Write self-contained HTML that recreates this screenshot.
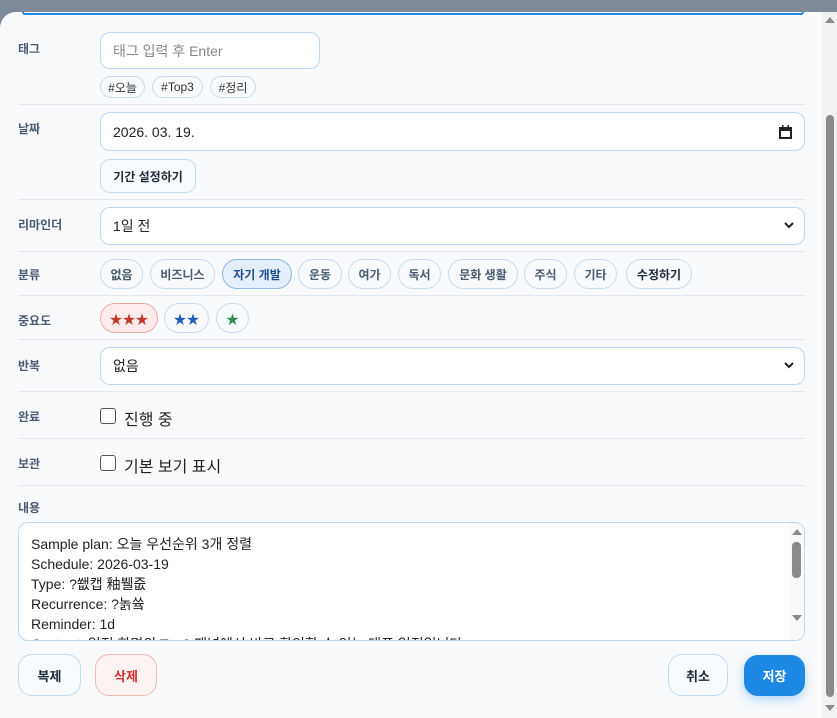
<!DOCTYPE html>
<html><head><meta charset="utf-8"><style>
*{box-sizing:border-box;margin:0;padding:0}
body{width:837px;height:718px;overflow:hidden;background:#7f8a99;font-family:"Liberation Sans","Noto Sans CJK KR",sans-serif;position:relative}
.dlg{position:absolute;left:0;top:12px;width:822px;height:706px;background:#f8fafc;border-radius:16px 0 0 0}
.a{position:absolute}
.lbl{position:absolute;left:18px;font-size:12px;font-weight:bold;color:#4a5a70}
.sep{position:absolute;left:18px;width:787px;height:1px;background:#e3e8ee}
.inp{position:absolute;background:#fff;border:1px solid #bcd8f2;border-radius:10px;font-size:14px;color:#222;padding-left:12px;display:flex;align-items:center}
.chip{position:absolute;border:1px solid #c9dbee;border-radius:16px;background:#f8fafc;font-size:12px;color:#4a5a70;font-weight:bold;display:flex;align-items:center;justify-content:center}
.btn{position:absolute;border:1px solid #c2dcf3;border-radius:14px;background:#f8fbff;font-size:13px;font-weight:bold;color:#1f2a37;display:flex;align-items:center;justify-content:center}
.cb{position:absolute;width:16px;height:16px;border:1.5px solid #555;border-radius:3px;background:#fff}
.ct{position:absolute;font-size:16px;color:#222}
.chev{position:absolute;right:10px;top:50%;margin-top:-4px}
</style></head><body>
<div class="dlg"></div>
<div class="a" style="left:22px;top:6px;width:782px;height:9px;background:#fff;border:2px solid #1e88e5;border-top:none;border-radius:0 0 10px 10px"></div>
<div class="a" style="left:0;top:0;width:837px;height:12px;background:#7f8a99"></div>
<div class="a" style="left:22px;top:12px;width:782px;height:3px;background:#fff;border:2px solid #1e88e5;border-top:none;border-radius:0 0 3px 3px"></div>
<div class="a" style="left:822px;top:12px;width:15px;height:706px;background:#f1f1f1"></div>
<div class="a" style="left:826px;top:115px;width:8px;height:582px;background:#8a8a8a;border-radius:4px"></div>
<div class="a" style="left:825px;top:17px;width:0;height:0;border-left:5px solid transparent;border-right:5px solid transparent;border-bottom:6px solid #8a8a8a"></div>
<div class="a" style="left:825px;top:705px;width:0;height:0;border-left:5px solid transparent;border-right:5px solid transparent;border-top:6px solid #8a8a8a"></div>

<div class="lbl" style="top:40px">태그</div>
<div class="inp" style="left:100px;top:32px;width:220px;height:37px;color:#888">태그 입력 후 Enter</div>
<div class="chip" style="left:100px;top:76px;width:45px;height:22px;font-weight:normal;color:#333">#오늘</div>
<div class="chip" style="left:152px;top:76px;width:51px;height:22px;font-weight:normal;color:#333">#Top3</div>
<div class="chip" style="left:210px;top:76px;width:46px;height:22px;font-weight:normal;color:#333">#정리</div>
<div class="sep" style="top:104px"></div>

<div class="lbl" style="top:120px">날짜</div>
<div class="inp" style="left:100px;top:112px;width:705px;height:39px">2026. 03. 19.
<svg class="a" style="right:12px;top:12px" width="13" height="14" viewBox="0 0 13 14"><rect x="1" y="3" width="11" height="10" fill="none" stroke="#222" stroke-width="2"/><rect x="1" y="3" width="11" height="3" fill="#222"/><rect x="3" y="0" width="1.5" height="3" fill="#222"/><rect x="8.5" y="0" width="1.5" height="3" fill="#222"/></svg></div>
<div class="btn" style="left:100px;top:159px;width:96px;height:34px;border-radius:10px;font-size:12px">기간 설정하기</div>
<div class="sep" style="top:199px"></div>

<div class="lbl" style="top:216px">리마인더</div>
<div class="inp" style="left:100px;top:207px;width:705px;height:38px">1일 전<svg class="chev" width="10" height="7" viewBox="0 0 10 7"><path d="M1 1l4 4 4-4" fill="none" stroke="#222" stroke-width="2"/></svg></div>
<div class="sep" style="top:251px"></div>

<div class="lbl" style="top:266px">분류</div>
<div class="chip" style="left:100px;top:259px;width:43px;height:30px">없음</div>
<div class="chip" style="left:150px;top:259px;width:65px;height:30px">비즈니스</div>
<div class="chip" style="left:222px;top:259px;width:70px;height:30px;background:#e4effb;border-color:#8fb6e4;color:#1d4f91">자기 개발</div>
<div class="chip" style="left:298px;top:259px;width:44px;height:30px">운동</div>
<div class="chip" style="left:348px;top:259px;width:43px;height:30px">여가</div>
<div class="chip" style="left:398px;top:259px;width:43px;height:30px">독서</div>
<div class="chip" style="left:448px;top:259px;width:70px;height:30px">문화 생활</div>
<div class="chip" style="left:524px;top:259px;width:43px;height:30px">주식</div>
<div class="chip" style="left:574px;top:259px;width:43px;height:30px">기타</div>
<div class="chip" style="left:626px;top:259px;width:66px;height:30px;color:#1f2a37">수정하기</div>
<div class="sep" style="top:295px"></div>

<div class="lbl" style="top:312px">중요도</div>
<div class="chip" style="left:100px;top:303px;width:58px;height:30px;background:#fdeceb;border-color:#f0aaa5;color:#c0392b;font-size:13px">★★★</div>
<div class="chip" style="left:164px;top:303px;width:45px;height:30px;color:#1f5fc0;font-size:13px">★★</div>
<div class="chip" style="left:216px;top:303px;width:33px;height:30px;color:#2e8b57;font-size:13px">★</div>
<div class="sep" style="top:339px"></div>

<div class="lbl" style="top:357px">반복</div>
<div class="inp" style="left:100px;top:347px;width:705px;height:38px">없음<svg class="chev" width="10" height="7" viewBox="0 0 10 7"><path d="M1 1l4 4 4-4" fill="none" stroke="#222" stroke-width="2"/></svg></div>
<div class="sep" style="top:391px"></div>

<div class="lbl" style="top:408px">완료</div>
<div class="cb" style="left:100px;top:408px"></div>
<div class="ct" style="left:124px;top:406px">진행 중</div>
<div class="sep" style="top:438px"></div>

<div class="lbl" style="top:455px">보관</div>
<div class="cb" style="left:100px;top:455px"></div>
<div class="ct" style="left:124px;top:453px">기본 보기 표시</div>
<div class="sep" style="top:485px"></div>

<div class="lbl" style="top:499px">내용</div>
<div class="a" style="left:18px;top:522px;width:787px;height:119px;background:#fff;border:1px solid #bcd8f2;border-radius:10px;overflow:hidden">
<div style="padding:11px 0 0 12px;font-size:14px;line-height:20px;color:#222">Sample plan: 오늘 우선순위 3개 정렬<br>Schedule: 2026-03-19<br>Type: ?쐢캡 釉뷀줎<br>Recurrence: ?놁쓬<br>Reminder: 1d<br>Content: 일정 화면의 Top3 패널에서 바로 확인할 수 있는 대표 일정입니다.</div>
<div class="a" style="right:0;top:0;width:15px;height:119px;background:#fafafa"></div>
<div class="a" style="right:3px;top:19px;width:9px;height:36px;background:#8a8a8a;border-radius:4px"></div>
<div class="a" style="right:2px;top:6px;border-left:5px solid transparent;border-right:5px solid transparent;border-bottom:6px solid #8a8a8a"></div>
<div class="a" style="right:2px;top:92px;border-left:5px solid transparent;border-right:5px solid transparent;border-top:6px solid #8a8a8a"></div>
</div>

<div class="btn" style="left:18px;top:654px;width:63px;height:42px">복제</div>
<div class="btn" style="left:95px;top:654px;width:62px;height:42px;background:#fdf3f3;border-color:#f2b8b5;color:#d32f2f">삭제</div>
<div class="btn" style="left:668px;top:654px;width:60px;height:42px">취소</div>
<div class="btn" style="left:744px;top:655px;width:61px;height:41px;background:#1e88e5;border-color:#1e88e5;color:#fff;box-shadow:0 4px 10px rgba(30,136,229,.3)">저장</div>
</body></html>
